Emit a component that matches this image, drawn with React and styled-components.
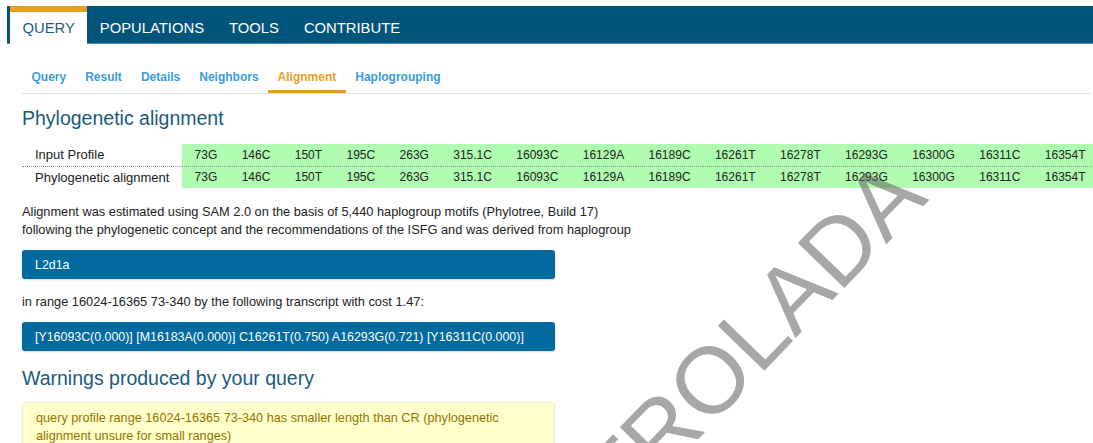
import React from "react";
import styled, { createGlobalStyle } from "styled-components";

const GlobalStyle = createGlobalStyle`
  html, body {
    margin: 0;
    padding: 0;
    height: 100%;
    overflow: hidden;
    background: #fff;
  }
  body {
    font-family: "Liberation Sans", Arial, sans-serif;
    color: #222;
  }
  #root { height: 100%; }
`;

const Page = styled.div`
  position: relative;
  height: 100%;
  box-sizing: border-box;
  overflow: hidden;
  padding: 6px 0 0 7px;
`;

const NavBar = styled.nav`
  display: flex;
  height: 37px;
  padding-left: 3px;
  background: #02557a;
  border-bottom: 1px solid #4f8db0;
`;

const NavTab = styled.a`
  display: flex;
  align-items: center;
  padding: 0 12.5px;
  border-top: 6px solid ${(p) => (p.$active ? "#e99e22" : "transparent")};
  background: ${(p) => (p.$active ? "#fff" : "transparent")};
  color: ${(p) => (p.$active ? "#1f5a7c" : "#fff")};
  font-size: 14.8px;
  text-transform: uppercase;
  margin-bottom: ${(p) => (p.$active ? "-1px" : "0")};
  cursor: pointer;
`;

const Content = styled.main`
  padding: 0 3px 0 15px;
`;

const SubNav = styled.div`
  display: flex;
  margin-top: 21px;
  border-bottom: 1px solid #dedede;
`;

const SubTab = styled.a`
  padding: 5px 9.5px 6px;
  line-height: 14px;
  font-size: 12px;
  font-weight: bold;
  color: ${(p) => (p.$active ? "#e99e22" : "#3a9cdd")};
  border-bottom: 3px solid ${(p) => (p.$active ? "#e99e22" : "transparent")};
  cursor: pointer;
`;

const Heading = styled.h2`
  margin: ${(p) => p.$top}px 0 0;
  font-size: 19.5px;
  line-height: 24px;
  font-weight: normal;
  color: #1c5a7e;
`;

const AlignTable = styled.table`
  width: max-content;
  margin-top: 14px;
  border-collapse: collapse;
  white-space: nowrap;
  font-size: 12px;
`;

const Row = styled.tr`
  height: 22px;
  & > td {
    border-bottom: ${(p) => (p.$divider ? "1px dotted #9a8fa0" : "none")};
  }
`;

const LabelCell = styled.td`
  width: 133px;
  min-width: 133px;
  padding: 0 13px;
  font-size: 13px;
  color: #222;
`;

const MotifCell = styled.td`
  padding: 0 12.2px;
  background: #b0fcb0;
  color: #222;
`;

const Text = styled.p`
  margin: ${(p) => p.$top}px 0 0;
  font-size: 12.8px;
  line-height: 18px;
`;

const ResultBar = styled.div`
  display: flex;
  align-items: center;
  width: 507px;
  height: 29px;
  margin-top: 11px;
  padding: 0 13px;
  border-radius: 3px;
  background: #036a9f;
  color: #fff;
  font-size: 12.4px;
  box-shadow: 0 1px 2px rgba(0, 0, 0, 0.18);
`;

const WarningBox = styled.div`
  width: 505px;
  margin-top: 12px;
  padding: 6px 13px;
  border: 1px solid #eeedc8;
  border-radius: 3px;
  background: #ffffcc;
  color: #927500;
  font-size: 12.7px;
  line-height: 18px;
`;

const WatermarkAnchor = styled.div`
  position: absolute;
  left: 940px;
  top: 210px;
  width: 0;
  height: 0;
  pointer-events: none;
`;

const WatermarkText = styled.span`
  position: absolute;
  right: 0;
  bottom: 0;
  font-size: 94px;
  line-height: 1;
  white-space: nowrap;
  color: rgba(92, 92, 92, 0.54);
  transform-origin: 100% 100%;
  transform: rotate(-46deg);
`;

const mainTabs = ["Query", "Populations", "Tools", "Contribute"];
const subTabs = ["Query", "Result", "Details", "Neighbors", "Alignment", "Haplogrouping"];
const motifs = [
  "73G", "146C", "150T", "195C", "263G", "315.1C", "16093C", "16129A",
  "16189C", "16261T", "16278T", "16293G", "16300G", "16311C", "16354T",
];
const profileRows = [
  { label: "Input Profile", values: motifs },
  { label: "Phylogenetic alignment", values: motifs },
];

export default function App() {
  return (
    <>
      <GlobalStyle />
      <Page>
        <NavBar>
          {mainTabs.map((t, i) => (
            <NavTab key={t} $active={i === 0}>{t}</NavTab>
          ))}
        </NavBar>
        <Content>
          <SubNav>
            {subTabs.map((t) => (
              <SubTab key={t} $active={t === "Alignment"}>{t}</SubTab>
            ))}
          </SubNav>

          <Heading $top={12}>Phylogenetic alignment</Heading>
          <AlignTable>
            <tbody>
              {profileRows.map((r, i) => (
                <Row key={r.label} $divider={i === 0}>
                  <LabelCell>{r.label}</LabelCell>
                  {r.values.map((v, j) => (
                    <MotifCell key={j}>{v}</MotifCell>
                  ))}
                </Row>
              ))}
            </tbody>
          </AlignTable>

          <Text $top={15}>
            Alignment was estimated using SAM 2.0 on the basis of 5,440 haplogroup motifs (Phylotree, Build 17)
            <br />
            following the phylogenetic concept and the recommendations of the ISFG and was derived from haplogroup
          </Text>
          <ResultBar>L2d1a</ResultBar>
          <Text $top={14}>in range 16024-16365 73-340 by the following transcript with cost 1.47:</Text>
          <ResultBar>
            [Y16093C(0.000)] [M16183A(0.000)] C16261T(0.750) A16293G(0.721) [Y16311C(0.000)]
          </ResultBar>

          <Heading $top={15}>Warnings produced by your query</Heading>
          <WarningBox>
            query profile range 16024-16365 73-340 has smaller length than CR (phylogenetic
            <br />
            alignment unsure for small ranges)
          </WarningBox>
        </Content>

        <WatermarkAnchor>
          <WatermarkText>COPIA NO CONTROLADA</WatermarkText>
        </WatermarkAnchor>
      </Page>
    </>
  );
}
